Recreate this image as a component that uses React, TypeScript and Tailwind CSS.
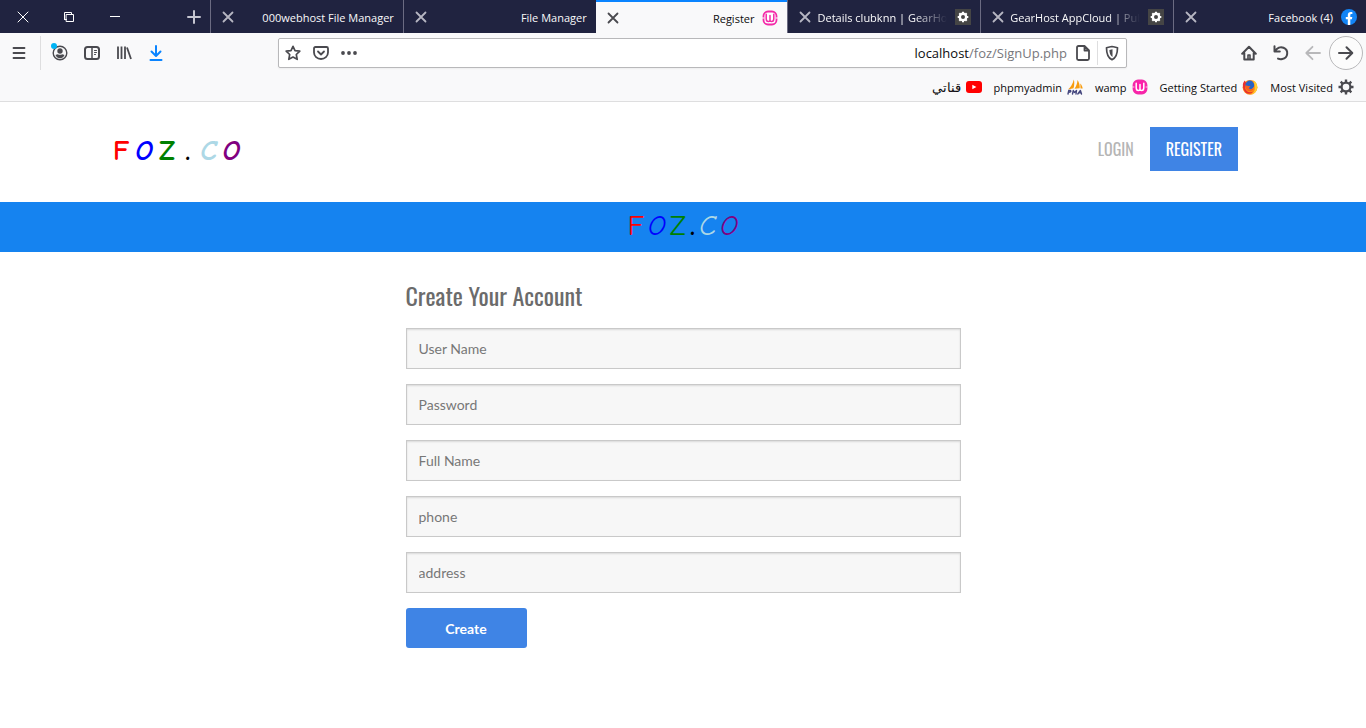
import type { ReactNode } from "react";

const UI_FONT = "font-['Open_Sans','Noto_Sans',sans-serif]";
const NARROW_FONT = "font-['Oswald','DejaVu_Sans_Condensed',sans-serif]";
const LOGO_FONT = "font-['Comic_Sans_MS','Comic_Neue','Lato',sans-serif]";

function Icon({ children, className = "size-4" }: { children: ReactNode; className?: string }) {
  return (
    <svg viewBox="0 0 16 16" fill="none" stroke="currentColor" strokeWidth="2" strokeLinecap="round" strokeLinejoin="round" className={`shrink-0 ${className}`} aria-hidden="true">
      {children}
    </svg>
  );
}

function CloseIcon() {
  return <Icon><path strokeWidth="1.8" d="M3.5 3.5l9 9M12.5 3.5l-9 9" /></Icon>;
}

function WampIcon({ active = false }: { active?: boolean }) {
  return (
    <Icon>
      <rect x="1.5" y="1.5" width="13" height="13" rx="4.5" fill={active ? "#fff" : "#ff1dab"} stroke="#f32aa8" strokeWidth="1.8" />
      <path stroke={active ? "#f32aa8" : "#fff"} strokeWidth="1.5" d="M4.2 4.2v4.6q0 2.8 2.200 2.800 1.600 0 1.600-1.600V5.500V10q0 1.600 1.600 1.600 2.200 0 2.200-2.800V4.200" />
      <path stroke={active ? "#fff" : "#ffc5e9"} strokeWidth="1" d="M.5 8h1.500M14 8h1.500" />
    </Icon>
  );
}

const gearTeeth = "M8 .5v3M8 12.500v3M.5 8h3M12.500 8h3M2.700 2.700l2.100 2.100M11.200 11.200l2.100 2.100M13.300 2.700l-2.100 2.100M4.800 11.200l-2.100 2.100";

function GearHostIcon() {
  return (
    <Icon>
      <path fill="#454545" stroke="none" d="M0 0h16v16H0z" />
      <circle cx="8" cy="8" r="3.200" stroke="#fff" strokeWidth="2.400" />
      <path stroke="#fff" strokeWidth="2" strokeLinecap="butt" d="M8 2.700v2M8 11.300v2M2.700 8h2M11.300 8h2M4.300 4.300l1.400 1.400M10.300 10.300l1.400 1.400M11.700 4.300l-1.400 1.400M5.700 10.300l-1.400 1.400" />
    </Icon>
  );
}

function FacebookIcon() {
  return (
    <Icon>
      <circle cx="8" cy="8" r="8" fill="#1284f5" stroke="none" />
      <path fill="#fff" stroke="none" d="M6.800 16V10.300H4.800V8h2V6.200C6.800 4 8 3 9.800 3c.8 0 1.600.15 1.600.15v1.900h-.9c-.9 0-1.200.5-1.200 1.200V8h2l-.35 2.300H9.300V16z" />
    </Icon>
  );
}

function GearIcon() {
  return (
    <Icon>
      <circle cx="8" cy="8" r="4.400" strokeWidth="2.200" />
      <path strokeLinecap="butt" strokeWidth="2.400" d={gearTeeth} />
    </Icon>
  );
}

function FirefoxIcon() {
  return (
    <Icon>
      <circle cx="8" cy="8.300" r="7.400" fill="#ff8b16" stroke="none" />
      <path fill="#e8302f" stroke="none" d="M.9 5.200C1.100 3.700 1.900 2.200 2.800 1.400c.2.900.8 1.700 1.500 2L3 9c1 4 5 5 8 3.500-3 4.400-10.600 2.600-10.100-7.300z" />
      <circle cx="7.800" cy="6" r="4.400" fill="#2763c5" stroke="none" />
      <path fill="#f6601d" stroke="none" d="M3.200 6.800c1-.7 2.200-.4 3 .3l2.300.2c-.3 1-1.500 1.100-1.700 2 1.500 1.500 4 1 5.200-.6-.5 3.300-4.800 4.600-7.200 2.300C3.600 9.800 3 8.300 3.200 6.800z" />
      <path fill="#ffcf32" stroke="none" d="M11 1.200c3.200 1.400 4.700 4.600 4.300 7.700-.5 3.400-3.100 6-6.600 6.600 3-1.300 4.500-4 4.100-7 .1-2.600-.9-5.200-1.800-7.300z" />
    </Icon>
  );
}

function YoutubeIcon() {
  return (
    <Icon>
      <rect x="0" y="2" width="16" height="12" rx="3" fill="#f00" stroke="none" />
      <path fill="#fff" stroke="none" d="M6.300 5.700v4.600L10.400 8z" />
    </Icon>
  );
}

function PmaIcon() {
  return (
    <Icon>
      <path fill="#f89c0e" stroke="none" d="M6.800.5c.8 2.500.6 6-.3 8.800L1 10.500c2.500-2 4.700-5.500 5.800-10zM10.500 1c1.500 2 2.500 5 2.200 8.300l-5.200.5c1.600-2.200 2.900-5.500 3-8.800zM13.300 4.500c1.200 1.200 2.100 3 2.400 5h-2.200z" />
      <path stroke="#45477e" strokeWidth="1.400" d="M1 15l.8-3.500h1.700q1.300 1.500-2 1.900M5.500 15l.8-3.500 1.200 2 2-2L9 15M10.800 15l2.600-3.500L14.500 15M11.800 13.800h2.400" />
    </Icon>
  );
}

type TabProps = { title: string; icon?: ReactNode; active?: boolean; faded?: boolean };

function Tab({ title, icon, active = false, faded = false }: TabProps) {
  return (
    <div className={`flex min-w-0 flex-1 items-center gap-1 px-[9px] ${active ? "border-t-2 border-[#0a84ff] bg-[#f9f9fa] text-[#0c0c0d]" : "border-l border-[#6b6b82] text-[#f9f9fa]"}`}>
      <button type="button" aria-label={`Close ${title}`} className={active ? "text-[#4a4a4f]" : "text-[#b6b6c2]"}><CloseIcon /></button>
      <span className={`min-w-0 flex-1 pt-0.5 text-[11px] leading-4 whitespace-nowrap ${faded ? "mask-r-from-75% text-left" : "text-right"}`}>{title}</span>
      {icon && <span className="ml-1 shrink-0">{icon}</span>}
    </div>
  );
}

function ToolButton({ label, children, className = "" }: { label: string; children: ReactNode; className?: string }) {
  return (
    <button type="button" aria-label={label} className={`flex size-8 shrink-0 items-center justify-center ${className}`}>
      {children}
    </button>
  );
}

function Bookmark({ href, icon, children }: { href: string; icon: ReactNode; children: ReactNode }) {
  return (
    <a href={href} className="flex items-center gap-[5px]">
      <span className="pt-0.5">{children}</span>
      {icon}
    </a>
  );
}

function Browser() {
  return (
    <div className={`${UI_FONT} border-b border-[#dededf] bg-[#f9f9fa] text-[#4a4a4f]`}>
      <div className="flex h-[33px] bg-[#202340]">
        <div className="flex w-[210px] shrink-0 items-center text-white">
          <button type="button" aria-label="Close window" className="flex w-[46px] justify-center"><Icon><path strokeWidth="1" d="M3 3l10 10M13 3L3 13" /></Icon></button>
          <button type="button" aria-label="Restore window" className="flex w-[46px] justify-center"><Icon><path strokeWidth="1" strokeLinejoin="miter" d="M5.500 5.500h7v7h-7zM3.500 10.500h2M3.500 10.500v-7h7v2" /></Icon></button>
          <button type="button" aria-label="Minimize window" className="flex w-[46px] justify-center"><Icon><path strokeWidth="1" strokeLinecap="butt" d="M3 7.500h10" /></Icon></button>
          <button type="button" aria-label="New tab" className="mr-2 ml-auto text-[#c5c5d0]"><Icon><path d="M8 2v12M2 8h12" /></Icon></button>
        </div>
        <Tab title="000webhost File Manager" />
        <Tab title="File Manager" />
        <Tab title="Register" active icon={<WampIcon active />} />
        <Tab title="Details clubknn | GearHos" faded icon={<GearHostIcon />} />
        <Tab title="GearHost AppCloud | Pub" faded icon={<GearHostIcon />} />
        <Tab title="Facebook (4)" icon={<FacebookIcon />} />
      </div>

      <div className="flex h-10 items-center">
        <div className="flex w-[278px] shrink-0 items-center">
          <ToolButton label="Menu" className="ml-[3px]"><Icon><path strokeWidth="1.800" d="M2.500 3h11M2.500 8h11M2.500 13h11" /></Icon></ToolButton>
          <span className="ml-[5px] h-[34px] w-px bg-[#dededf]" />
          <ToolButton label="Account" className="relative ml-[3px]">
            <Icon>
              <circle cx="8" cy="8" r="6.800" strokeWidth="1.400" />
              <circle cx="8" cy="6" r="2.700" fill="currentColor" stroke="none" />
              <path fill="currentColor" stroke="none" d="M3.500 10q1.500-.8 2.300-.8 2.200 1.300 4.400 0 .8 0 2.300.8-1.500 3.300-4.500 3.300T3.500 10z" />
            </Icon>
            <span className="absolute top-[6px] left-[7px] size-[6px] rounded-full bg-[#00b3f4]" />
          </ToolButton>
          <ToolButton label="Sidebar"><Icon><rect x="1" y="2" width="14" height="12" rx="2.500" /><path strokeWidth="1.500" d="M8 2v12" /><path strokeWidth="1" d="M10.500 5.500h2M10.500 7.500h2M10.500 9.500h1" /></Icon></ToolButton>
          <ToolButton label="Library"><Icon><path strokeLinecap="butt" strokeWidth="1.800" d="M2 1.500v12.500M5.500 1.500v12.500M9 1.500v12.500M11 2.500l4 11.500" /></Icon></ToolButton>
          <ToolButton label="Downloads" className="text-[#0a84ff]"><Icon><path d="M8 1v9.500M3.500 6.500L8 11l4.500-4.500M2.500 15h11" /></Icon></ToolButton>
        </div>

        <div className="flex h-[30px] min-w-0 flex-1 items-center rounded-xs border border-[#b8b8ba] bg-white shadow-xs">
          <button type="button" aria-label="Bookmark this page" className="ml-[6px]"><Icon><path strokeWidth="1.700" d="M8 1.300l2 4.300 4.800.6-3.500 3.300.9 4.800L8 12l-4.200 2.300.9-4.800L1.200 6.200 6 5.600z" /></Icon></button>
          <button type="button" aria-label="Save to Pocket" className="ml-3"><Icon><path strokeWidth="1.800" d="M2.500 2h11q1.500 0 1.500 1.500V7.500a7 6.500 0 0 1-14 0V3.500Q1 2 2.500 2z" /><path strokeWidth="1.800" d="M5 6.500l3 3 3-3" /></Icon></button>
          <button type="button" aria-label="Page actions" className="ml-3"><Icon><g fill="currentColor" stroke="none"><circle cx="2" cy="8" r="1.900" /><circle cx="8" cy="8" r="1.900" /><circle cx="14" cy="8" r="1.900" /></g></Icon></button>
          <span className="ml-auto pt-0.5 text-[13px] text-[#77777c]"><span className="text-[#0c0c0d]">localhost</span>/foz/SignUp.php</span>
          <button type="button" aria-label="Site information" className="ml-2"><Icon><path strokeWidth="1.800" d="M9.500 1H3.500Q2 1 2 2.500v11Q2 15 3.500 15h9q1.500 0 1.500-1.500v-8zM9.500 1v4.500H14" /></Icon></button>
          <span className="ml-[6px] h-6 w-px bg-[#dededf]" />
          <button type="button" aria-label="Tracking protection" className="mr-[6px] ml-[6px]"><Icon><path strokeWidth="1.700" d="M8 1.500c2 .3 4 .8 5.500 1.200 0 6-1 10-5.500 12C3.500 12.700 2.500 8.700 2.500 2.700 4 2.300 6 1.800 8 1.500z" /><path fill="currentColor" stroke="none" d="M8.500 4.300v7.800C6.300 10.500 5.500 8 5.400 4.900z" /></Icon></button>
        </div>

        <div className="flex w-[239px] shrink-0 items-center justify-end pr-[3px]">
          <ToolButton label="Home"><Icon><path d="M1.200 8.700L8 1.800l6.800 6.900M3.300 8v6.500h9.400V8" /><path strokeWidth="1.600" d="M7 14v-4h2v4" /></Icon></ToolButton>
          <ToolButton label="Reload"><Icon><path d="M1.500 1.200V6.500h5.300M2 6.200C4 2.800 7.500 1.500 10.500 2.700a5.900 5.900 0 0 1-1.200 11.300q-2.300.5-4.300-.4" /></Icon></ToolButton>
          <ToolButton label="Forward" className="text-[#b8b8ba]"><Icon><path strokeWidth="1.800" d="M15 8H1.500M7.500 1.800L1.300 8l6.200 6.200" /></Icon></ToolButton>
          <button type="button" aria-label="Back" className="flex size-[34px] items-center justify-center rounded-full border border-[#b8b8ba] bg-[#fcfcfc]"><Icon><path d="M1 8h13M8.500 2.200L14.300 8l-5.800 5.800" /></Icon></button>
        </div>
      </div>

      <nav aria-label="Bookmarks" className="flex h-7 items-center justify-end gap-3 pr-3 text-[11px] text-[#0c0c0d]">
        <Bookmark href="#channel" icon={<YoutubeIcon />}><span dir="rtl" className="text-[13px] leading-4">قناتي</span></Bookmark>
        <Bookmark href="#phpmyadmin" icon={<PmaIcon />}>phpmyadmin</Bookmark>
        <Bookmark href="#wamp" icon={<WampIcon />}>wamp</Bookmark>
        <Bookmark href="#getting-started" icon={<FirefoxIcon />}>Getting Started</Bookmark>
        <Bookmark href="#most-visited" icon={<span className="text-[#4a4a4f]"><GearIcon /></span>}>Most Visited</Bookmark>
      </nav>
    </div>
  );
}

const fields = [
  { id: "username", label: "User Name", type: "text" },
  { id: "password", label: "Password", type: "password" },
  { id: "fullname", label: "Full Name", type: "text" },
  { id: "phone", label: "phone", type: "tel" },
  { id: "address", label: "address", type: "text" },
];

function Wordmark({ dotClass = "" }: { dotClass?: string }) {
  return (
    <>
      <span className="text-[#ff0000]">F</span>
      <span className="text-[#0000ff] italic">O</span>
      <span className="text-[#008000]">Z</span>
      <span className={`font-bold text-black ${dotClass}`}>.</span>
      <span className="text-[#add8e6] italic">C</span>
      <span className="text-[#800080] italic">O</span>
    </>
  );
}

export default function App() {
  return (
    <div className="min-h-screen bg-white">
      <Browser />
      <header className="mx-auto flex h-[100px] max-w-[1170px] items-center justify-between px-[15px] pb-[6px]">
        <a href="#home" className={`${LOGO_FONT} flex gap-[6px] pt-1 text-[28px] leading-9 font-bold`}><Wordmark dotClass="px-1" /></a>
        <nav aria-label="Account" className={`${NARROW_FONT} mr-[15px] flex h-11 items-center text-base`}>
          <a href="#login" className="px-4 text-[#b5b5b5]">LOGIN</a>
          <a href="#register" className="flex h-11 items-center bg-[#3f84e5] px-4 text-white">REGISTER</a>
        </nav>
      </header>
      <div className={`${LOGO_FONT} flex h-[50px] items-center justify-center gap-1 bg-[#1583f0] pb-0.5 text-[28px] leading-9`}><Wordmark /></div>
      <main className="mx-auto max-w-[555px] pt-[27px]">
        <h1 className={`${NARROW_FONT} text-2xl leading-8 text-[#6b6b6b]`}>Create Your Account</h1>
        <form className="mt-[17px] flex flex-col gap-[15px] font-['Lato',sans-serif] text-sm">
          {fields.map((f) => (
            <input key={f.id} id={f.id} name={f.id} type={f.type} aria-label={f.label} placeholder={f.label} className="h-[41px] w-full border border-[#c9c9c9] bg-[#f7f7f7] px-3 shadow-[inset_0_1px_2px_rgba(0,0,0,0.12)] placeholder:text-[#777777]" />
          ))}
          <button type="button" className="h-10 w-[121px] rounded-[3px] bg-[#3f84e5] pt-0.5 font-bold text-white">Create</button>
        </form>
      </main>
    </div>
  );
}
